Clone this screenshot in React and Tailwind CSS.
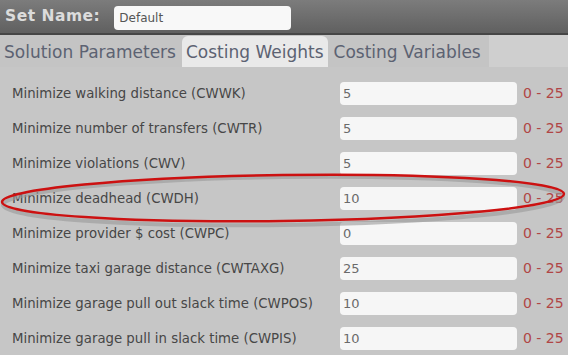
import React from 'react';

const rows = [
    { label: 'Minimize walking distance (CWWK)', value: '5' },
    { label: 'Minimize number of transfers (CWTR)', value: '5' },
    { label: 'Minimize violations (CWV)', value: '5' },
    { label: 'Minimize deadhead (CWDH)', value: '10' },
    { label: 'Minimize provider $ cost (CWPC)', value: '0' },
    { label: 'Minimize taxi garage distance (CWTAXG)', value: '25' },
    { label: 'Minimize garage pull out slack time (CWPOS)', value: '10' },
    { label: 'Minimize garage pull in slack time (CWPIS)', value: '10' },
];

const App = () => {
    return (
        <div className="relative w-[568px] h-[355px] overflow-hidden bg-[#c6c6c6] font-['DejaVu_Sans',sans-serif]">
            {/* Header */}
            <div className="h-[35px] flex items-center gap-[14px] pl-[5px] bg-gradient-to-b from-[#7c7c7c] to-[#606060] border-b-2 border-[#464646]">
                <span className="text-[15.5px] font-bold text-[#dcdcdc] tracking-[0.5px]">Set Name:</span>
                <div className="w-[177px] h-[24px] mt-[2px] bg-[#f8f8f8] rounded-[4px] flex items-center px-[5px] text-[12px] text-[#555]">Default</div>
            </div>

            {/* Tabs */}
            <div className="h-[32px] flex items-end bg-[#c4c4c4] text-[17px] text-[#5c6272]">
                <div className="h-full flex items-center pt-[3px] pl-[4px] pr-[6px]">Solution Parameters</div>
                <div className="h-[31px] flex items-center pt-[2px] px-[4px] bg-[#e9e9e9] rounded-t-[6px]">Costing Weights</div>
                <div className="h-full flex items-center pt-[3px] px-[6px]">Costing Variables</div>
                <div className="flex-1 h-full ml-[2px] bg-[#cfcfcf]" />
            </div>

            {/* Rows */}
            <div className="pt-[9px]">
                {rows.map((row) => (
                    <div key={row.label} className="h-[35px] flex items-center">
                        <div className="w-[340px] pl-[12px] text-[13.3px] text-[#474747] whitespace-nowrap">{row.label}</div>
                        <div className="w-[177px] h-[23px] bg-[#f6f6f6] rounded-[4px] flex items-center px-[3px] text-[13px] text-[#6a6a6a]">{row.value}</div>
                        <div className="pl-[6px] text-[14px] text-[#b04545] whitespace-nowrap">0 - 25</div>
                    </div>
                ))}
            </div>

            {/* Red highlight ellipse */}
            <svg className="absolute left-0 top-0 pointer-events-none" width="568" height="355">
                <ellipse cx="283" cy="201" rx="280" ry="24" fill="none" stroke="#9a9a9a" strokeWidth="4" opacity="0.6" transform="rotate(-0.8 283 200)" />
                <ellipse cx="283" cy="198" rx="281" ry="23" fill="none" stroke="#cc1111" strokeWidth="2.5" transform="rotate(-0.8 283 198)" />
            </svg>
        </div>
    );
};

export default App;
